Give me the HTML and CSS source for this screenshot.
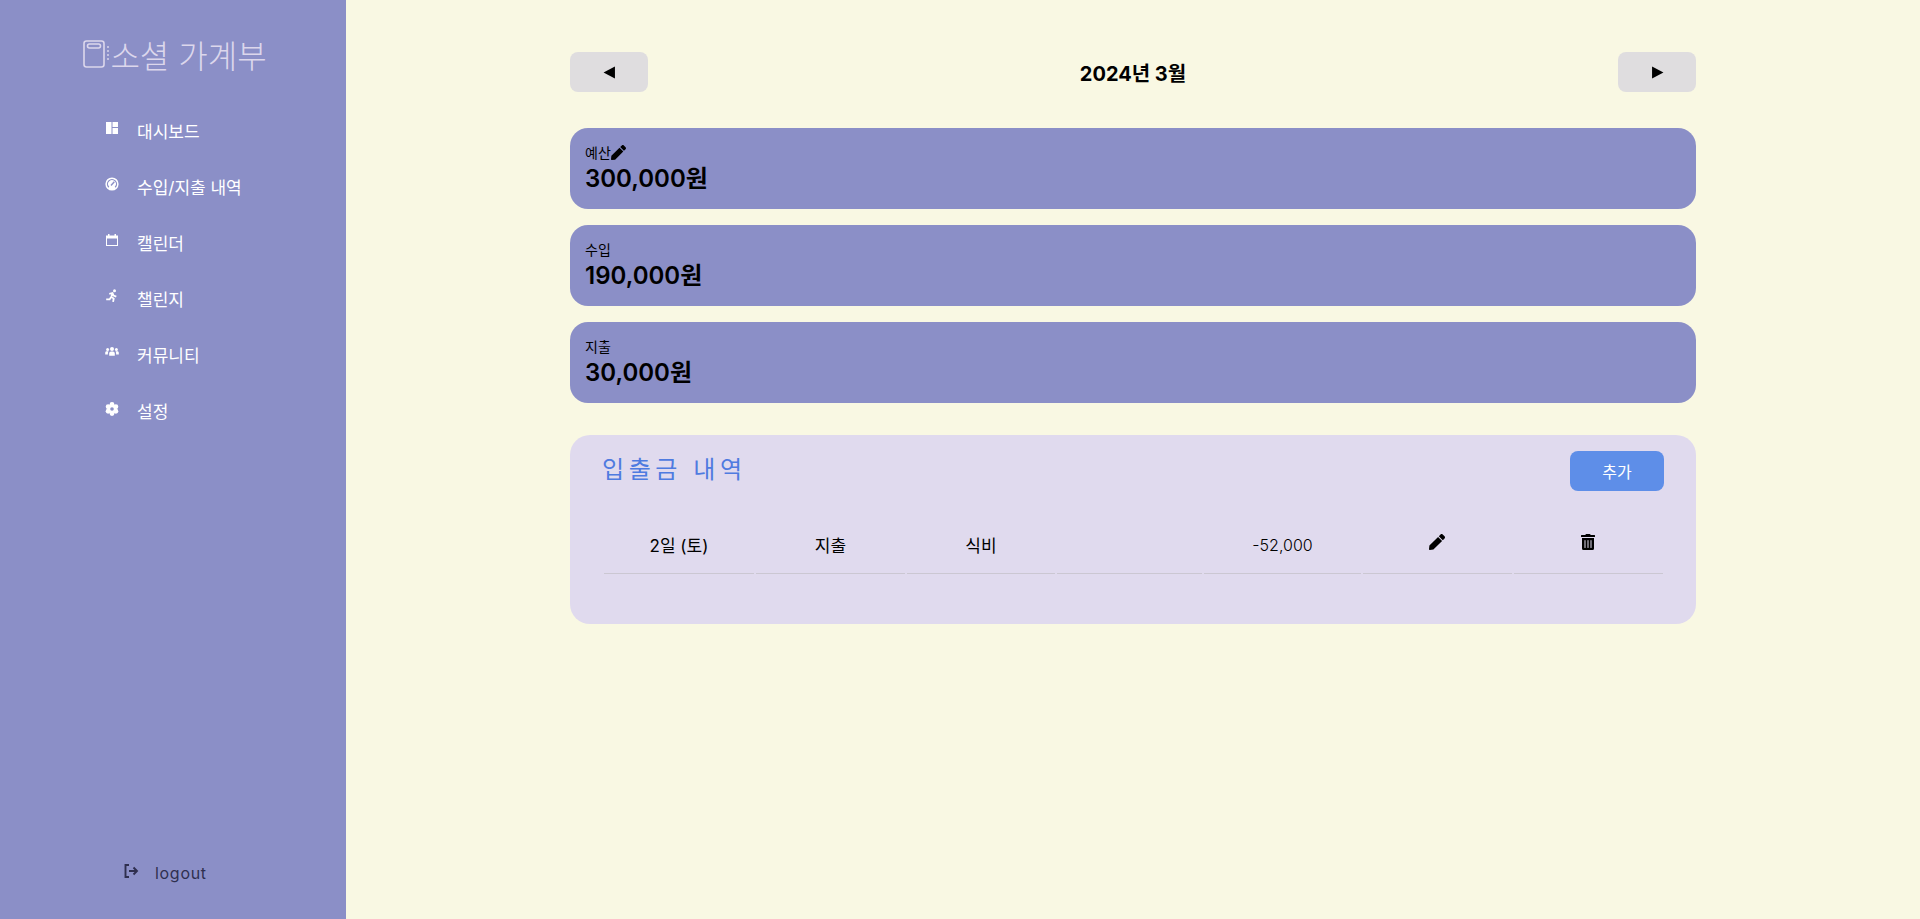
FILE: index.html
```html
<!DOCTYPE html>
<html lang="ko">
<head>
<meta charset="utf-8">
<title>소셜 가계부</title>
<link rel="stylesheet" href="styles.css">
</head>
<body>
<div class="app">
  <aside class="sidebar">
    <div class="brand">
      <svg class="brand-icon" viewBox="0 0 28 28" fill="none" stroke="currentColor" stroke-width="1.6"><rect x="1" y="1" width="20" height="26" rx="2.5"/><rect x="4.500" y="4" width="13" height="4" rx="2"/><path d="M25 6v2M25 10v2M25 14v2M25 18v2" stroke-width="1.4"/></svg>
      <span>소셜 가계부</span>
    </div>
    <nav class="nav">
      <a class="nav-item"><svg class="nav-icon" viewBox="0 0 14 14" fill="currentColor"><rect x="1" y="1" width="5.5" height="12"/><rect x="7.5" y="1" width="5.5" height="5"/><rect x="7.5" y="7" width="5.5" height="6"/></svg><span>대시보드</span></a>
      <a class="nav-item"><svg class="nav-icon" viewBox="0 0 14 14"><circle cx="7" cy="7" r="6.6" fill="currentColor"/><path d="M3.800 10.200a4.500 4.500 0 1 1 6.400 0" fill="none" stroke="#8b8fc7" stroke-width="1.300"/><path d="M6 8.500L9.300 4.700" stroke="#8b8fc7" stroke-width="1.400"/></svg><span>수입/지출 내역</span></a>
      <a class="nav-item"><svg class="nav-icon" viewBox="0 0 14 14" fill="currentColor"><path d="M1 2.500h12v3H1z"/><path d="M3 1h1.500v2H3zM9.500 1H11v2H9.500z"/><path d="M1 5h1v7h10V5h1v8H1z"/></svg><span>캘린더</span></a>
      <a class="nav-item"><svg class="nav-icon" viewBox="0 0 14 14" fill="none" stroke="currentColor" stroke-width="1.800"><circle cx="9.500" cy="1.700" r="1.500" fill="currentColor" stroke="none"/><path d="M4.300 4.800l3.200-.8 1.100 2.600 2.700 1M7.500 4.200L6.300 8l2.400 1.600-.6 3.200M5.800 8.600L4.600 10.400H1.200"/></svg><span>챌린지</span></a>
      <a class="nav-item"><svg class="nav-icon" viewBox="0 0 14 14" fill="currentColor"><circle cx="7" cy="4" r="2"/><circle cx="2.600" cy="4.600" r="1.500"/><circle cx="11.400" cy="4.600" r="1.500"/><path d="M4.200 10.800V8.400c0-1 .8-1.900 1.900-1.900h1.800c1.100 0 1.900.9 1.900 1.900v2.400z"/><path d="M.2 9.600V7.800c0-.8.6-1.500 1.400-1.500h1.900c-.4.500-.6 1.200-.6 2v1.300zM13.800 9.600V7.800c0-.8-.6-1.500-1.400-1.500h-1.900c.4.500.6 1.200.6 2v1.300z"/></svg><span>커뮤니티</span></a>
      <a class="nav-item"><svg class="nav-icon gear" viewBox="0 0 14 14" fill="currentColor"><circle cx="7" cy="2.500" r="2.400"/><circle cx="7" cy="11.500" r="2.400"/><circle cx="3.100" cy="4.750" r="2.400"/><circle cx="10.900" cy="4.750" r="2.400"/><circle cx="3.100" cy="9.250" r="2.400"/><circle cx="10.900" cy="9.250" r="2.400"/><circle cx="7" cy="7" r="4"/><circle cx="7" cy="7" r="1.800" fill="#8b8fc7"/></svg><span>설정</span></a>
    </nav>
    <a class="logout"><svg class="logout-icon" viewBox="0 0 16 16" fill="none" stroke="currentColor" stroke-width="1.900"><path d="M6 2H2.500v12H6M6 8h8M10.500 4.500L14 8l-3.500 3.500"/></svg><span>logout</span></a>
  </aside>
  <main class="main">
    <div class="content">
      <header class="month-bar">
        <button class="month-btn"><svg class="tri" viewBox="0 0 12 12"><path d="M11 0.500v11L0.500 6z"/></svg></button>
        <h2 class="month-title">2024년 3월</h2>
        <button class="month-btn"><svg class="tri" viewBox="0 0 12 12"><path d="M1 0.500v11L11.500 6z"/></svg></button>
      </header>
      <section class="cards">
        <div class="card">
          <div class="card-label">예산<svg class="pen-sm" viewBox="0 0 512 512"><path d="M290.74 93.24l128.02 128.02-277.99 277.99-114.14 12.6C11.35 513.54-1.56 500.62.14 485.34l12.7-114.22 277.9-278zm207.2-19.06l-60.11-60.11c-18.75-18.75-49.16-18.75-67.91 0l-56.55 56.55 128.02 128.02 56.55-56.55c18.75-18.76 18.75-49.16 0-67.91z"/></svg></div>
          <div class="card-value">300,000원</div>
        </div>
        <div class="card">
          <div class="card-label">수입</div>
          <div class="card-value">190,000원</div>
        </div>
        <div class="card">
          <div class="card-label">지출</div>
          <div class="card-value">30,000원</div>
        </div>
      </section>
      <section class="panel">
        <div class="panel-head">
          <h3 class="panel-title">입출금 내역</h3>
          <button class="add-btn">추가</button>
        </div>
        <table class="tx-table">
          <tr>
            <td class="c-date">2일 (토)</td>
            <td class="c-type">지출</td>
            <td class="c-cat">식비</td>
            <td class="c-memo"></td>
            <td class="c-amt">-52,000</td>
            <td class="c-act"><svg class="act-icon" viewBox="0 0 512 512"><path d="M290.74 93.24l128.02 128.02-277.99 277.99-114.14 12.6C11.35 513.54-1.56 500.62.14 485.34l12.7-114.22 277.9-278zm207.2-19.06l-60.11-60.11c-18.75-18.75-49.16-18.75-67.91 0l-56.55 56.55 128.02 128.02 56.55-56.55c18.75-18.76 18.75-49.16 0-67.91z"/></svg></td>
            <td class="c-act"><svg class="act-icon" viewBox="0 0 448 512"><path d="M32 464a48 48 0 0 0 48 48h288a48 48 0 0 0 48-48V128H32zm272-256a16 16 0 0 1 32 0v224a16 16 0 0 1-32 0zm-96 0a16 16 0 0 1 32 0v224a16 16 0 0 1-32 0zm-96 0a16 16 0 0 1 32 0v224a16 16 0 0 1-32 0zM432 32H312l-9.400-18.700A24 24 0 0 0 281.100 0H166.800a23.720 23.720 0 0 0-21.400 13.300L136 32H16A16 16 0 0 0 0 48v32a16 16 0 0 0 16 16h416a16 16 0 0 0 16-16V48a16 16 0 0 0-16-16z"/></svg></td>
          </tr>
        </table>
      </section>
    </div>
  </main>
</div>
</body>
</html>
```
FILE: styles.css
```css
* { box-sizing: border-box; }
html, body { margin: 0; height: 100%; }
body {
  font-family: Inter, "Noto Sans CJK KR", sans-serif;
  background: #f9f8e3;
  color: #000;
}
.app { display: flex; height: 919px; overflow: hidden; }

.sidebar {
  width: 346px;
  flex: none;
  background: #8b8fc7;
  display: flex;
  flex-direction: column;
  color: #fff;
}
.brand {
  display: flex;
  align-items: center;
  justify-content: center;
  height: 28px;
  margin-top: 40px;
  padding-left: 4px;
  font-family: "Noto Sans CJK KR", sans-serif;
  font-weight: 300;
  font-size: 32px;
  line-height: 28px;
  color: #dcd7ec;
}
.brand-icon { width: 28px; height: 28px; flex: none; margin-right: -1px; }
.nav { display: flex; flex-direction: column; margin-top: 34px; padding-left: 105px; }
.nav-item { display: flex; align-items: center; height: 56px; font-size: 17px; color: #fff; }
.nav-icon { width: 14px; height: 14px; flex: none; margin-right: 18px; position: relative; top: -2px; }
.nav-icon.gear { top: -1px; }
.logout {
  margin-top: auto;
  margin-bottom: 36px;
  margin-left: 123px;
  display: flex;
  align-items: center;
  font-size: 16px;
  letter-spacing: 0.7px;
  color: #2f2f4f;
}
.logout-icon { width: 16px; height: 16px; margin-right: 16px; position: relative; top: -2px; }

.main { flex: 1; display: flex; justify-content: center; }
.content { width: 1126px; padding-top: 52px; }

.month-bar { display: flex; align-items: center; justify-content: space-between; height: 40px; }
.month-btn {
  width: 78px; height: 40px; border: none; border-radius: 8px;
  background: #dfdddf; display: flex; align-items: center; justify-content: center; padding: 0;
}
.tri { width: 13px; height: 13px; }
.month-title { margin: 0; font-size: 20px; font-weight: 700; }

.cards { display: flex; flex-direction: column; gap: 16px; margin-top: 36px; }
.card { height: 81px; border-radius: 18px; background: #8b8fc7; padding: 14px 15px; }
.card-label { display: flex; align-items: center; height: 20px; font-size: 14px; font-weight: 400; }
.pen-sm { width: 15px; height: 15px; }
.card-value { margin-top: 2px; font-size: 24px; font-weight: 600; line-height: 30px; }

.panel { margin-top: 32px; height: 189px; border-radius: 20px; background: #e0daee; padding: 16px 32px; }
.panel-head { display: flex; justify-content: space-between; align-items: flex-start; }
.panel-title {
  margin: 1px 0 0; font-family: "Noto Sans CJK KR", sans-serif; font-weight: 400;
  font-size: 24px; letter-spacing: 4.6px; line-height: 32px; color: #4f7be0;
}
.add-btn {
  width: 94px; height: 40px; padding: 0 0 1px; border: none; border-radius: 8px; background: #5e8ee8;
  color: #fff; font: inherit; font-size: 16px;
}
.tx-table { width: 100%; margin-top: 19px; border-collapse: separate; border-spacing: 2px; table-layout: fixed; }
.tx-table td { height: 62px; padding: 4px 0 0; border-bottom: 1px solid #cbc7d2; text-align: center; font-size: 17px; }
.tx-table .c-amt { font-size: 16px; font-weight: 300; }
.c-date { width: 150px; }
.c-type { width: 149px; }
.c-cat { width: 148px; }
.c-memo { width: 145px; }
.c-amt { width: 157px; }
.c-act { width: 149px; }
.act-icon { width: 16px; height: 16px; position: relative; top: -1px; left: -1px; }
```
